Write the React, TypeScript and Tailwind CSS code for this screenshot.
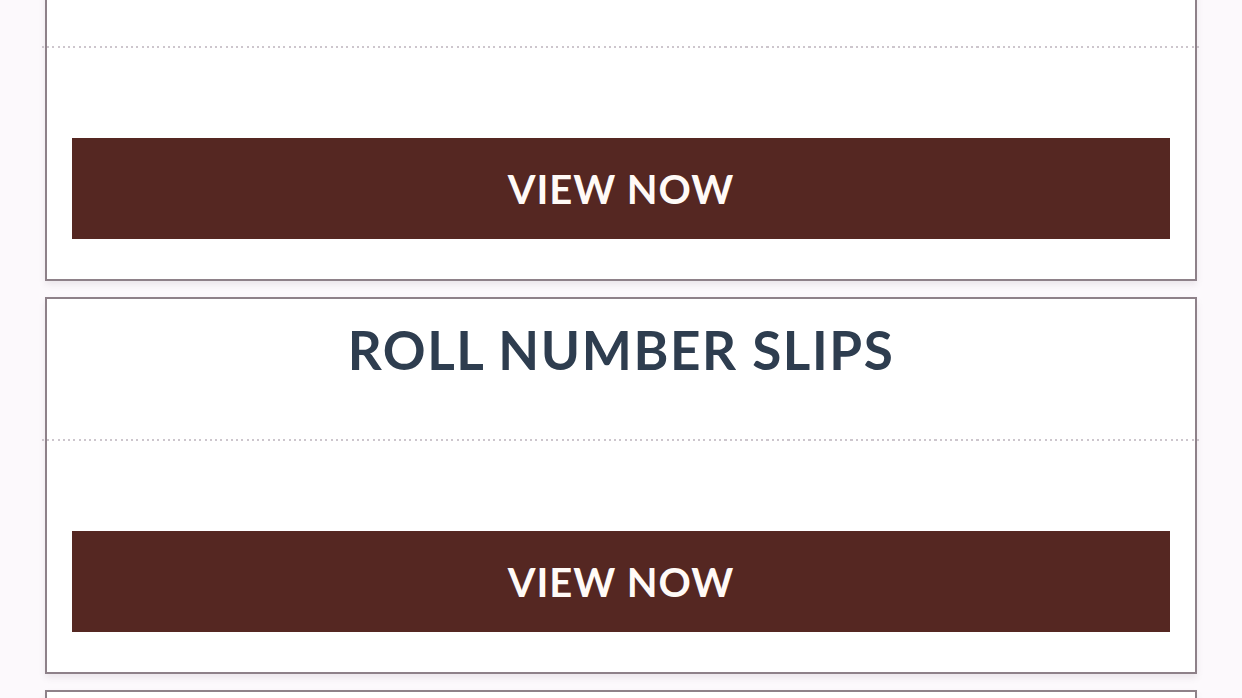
import React from "react";

function Card({ title, first }: { title?: string; first?: boolean }) {
  return (
    <div
      className={`border-2 border-[#8e8189] bg-white shadow-[0_4px_6px_rgba(120,110,120,0.12)] ${
        first ? "-mt-[96px]" : "mt-[16px]"
      }`}
    >
      <div className="h-[140px] pt-[21px] text-center">
        {title ? (
          <h2 className="text-[53px] leading-[60px] font-bold text-[#2e3d4f] tracking-[1.6px]">
            {title}
          </h2>
        ) : null}
      </div>
      <div className="-mx-[5px] h-[2px] bg-[repeating-linear-gradient(90deg,#cdc6cd_0px,#cdc6cd_2px,transparent_2px,transparent_5.25px)]" />
      <div className="px-[25px] pt-[90px] pb-[40px]">
        <button className="flex h-[101px] w-full items-center justify-center bg-[#552722] text-[40px] font-bold tracking-[1px] text-[#fffaf7]">
          VIEW NOW
        </button>
      </div>
    </div>
  );
}

export default function App() {
  return (
    <div
      className="h-[698px] overflow-hidden bg-[#fcf9fc] px-[45px]"
      style={{ fontFamily: "Lato, 'Open Sans', sans-serif" }}
    >
      <Card first />
      <Card title="ROLL NUMBER SLIPS" />
      <Card />
    </div>
  );
}
